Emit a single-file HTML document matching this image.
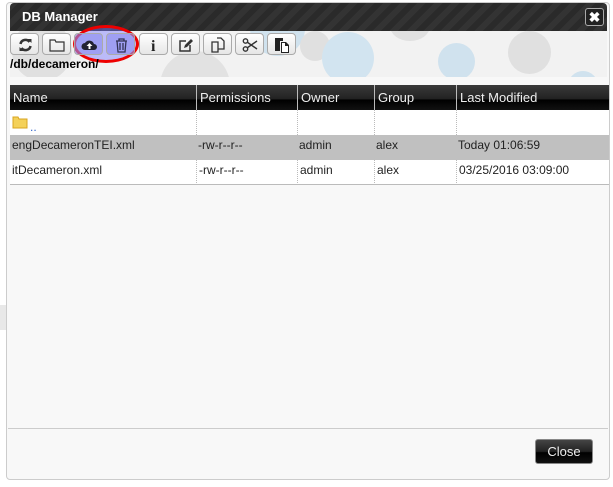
<!DOCTYPE html>
<html><head><style>
*{box-sizing:border-box}
body{margin:0;width:613px;height:487px;background:#fff;font-family:"Liberation Sans",sans-serif;position:relative;overflow:hidden}
.abs{position:absolute}
#dlg{left:6px;top:2px;width:604px;height:478px;background:#f8f8f8;border:1px solid #ccc;border-radius:4px}
#title{left:10px;top:3px;width:597px;height:28px;border-radius:4px 4px 0 0;background:repeating-linear-gradient(135deg,#333 0 6px,#2a2a2a 6px 12px);color:#fff;font-weight:bold;font-size:13px;line-height:28px;padding-left:12px}
#x{left:585px;top:8px;width:19px;height:18px;border:1px solid #aaa;border-radius:3px;background:#222;color:#fff;font-size:14px;font-weight:bold;text-align:center;line-height:16px}
#bub{left:10px;top:31px;width:597px;height:46px;background:#f2f2f2;overflow:hidden}
.c{position:absolute;border-radius:50%}
.btn{position:absolute;top:33px;width:29px;height:22px;border:1px solid #aaa;border-radius:4px;background:linear-gradient(#fff,#e6e6e6)}
.btn svg{position:absolute;left:6px;top:3px}
#path{left:10px;top:57px;font-size:12px;font-weight:bold;color:#000}
#thead{left:10px;top:85px;width:599px;height:25px;background:linear-gradient(#3a3a3a,#222 55%,#000 60%,#111);color:#eee;font-size:13px}
#thead div{position:absolute;top:0;height:25px;line-height:25px;padding-left:3px;border-left:1px solid #bbb}
.row{position:absolute;left:10px;width:599px;height:25px;font-size:12px;color:#222}
.row div{position:absolute;top:0;height:25px;line-height:20px;padding-left:2px;border-left:1px dotted #bbb}
</style></head><body>
<div class="abs" style="left:0;top:305px;width:6px;height:25px;background:#e8e8e8"></div>
<div class="abs" id="dlg"></div>
<div class="abs" id="title">DB Manager</div>
<div class="abs" id="x">✖</div>
<div class="abs" id="bub">
<div class="c" style="left:2px;top:-10px;width:60px;height:60px;background:#e0e0e0"></div>
<div class="c" style="left:150px;top:20px;width:70px;height:70px;background:#e2e2e2"></div>
<div class="c" style="left:240px;top:-30px;width:55px;height:55px;background:#d0e2ee"></div>
<div class="c" style="left:290px;top:0px;width:30px;height:30px;background:#e0e0e0"></div>
<div class="c" style="left:312px;top:1px;width:52px;height:52px;background:#d2e4f0"></div>
<div class="c" style="left:428px;top:12px;width:37px;height:37px;background:#d0e2ee"></div>
<div class="c" style="left:498px;top:0px;width:43px;height:43px;background:#e0e0e0"></div>
<div class="c" style="left:558px;top:40px;width:30px;height:30px;background:#d0e2ee"></div>
<div class="c" style="left:380px;top:-20px;width:40px;height:30px;background:#e0e0e0"></div>
</div>
<div class="abs" style="left:73px;top:25px;width:66px;height:38px;border:3px solid #e00;border-radius:50%;background:rgba(120,120,255,.45)"></div>
<div class="btn" style="left:10px"><svg width="17" height="16" viewBox="0 0 16 16"><path d="M3 7a5 5 0 0 1 9-2M13 9a5 5 0 0 1-9 2" stroke="#333" stroke-width="2.5" fill="none"/><path d="M10 2h4v4zM6 14H2v-4z" fill="#333"/></svg></div>
<div class="btn" style="left:42px"><svg width="17" height="16"><path d="M1 3h5l1 2h8v9H1z" fill="none" stroke="#333" stroke-width="1.2"/></svg></div>
<div class="btn" style="left:74px;background:rgba(140,140,240,.6)"><svg width="17" height="16"><path d="M4 13a3.5 3.5 0 0 1 0-7 5 5 0 0 1 9 1 3 3 0 0 1 0 6z" fill="#223"/><path d="M8.5 6l-3 3h2v3h2V9h2z" fill="#fff"/></svg></div>
<div class="btn" style="left:106px;background:rgba(140,140,240,.6)"><svg width="17" height="16"><path d="M3 4h11M6 4V2h5v2M4 4l1 11h7l1-11M7 6v7M10 6v7" fill="none" stroke="#335" stroke-width="1.3"/></svg></div>
<div class="btn" style="left:139px"><svg width="17" height="16"><text x="5" y="14" font-family="Liberation Serif" font-weight="bold" font-size="16" fill="#222">i</text></svg></div>
<div class="btn" style="left:171px"><svg width="17" height="16"><path d="M12 8v6H2V4h6" fill="none" stroke="#333" stroke-width="1.5"/><path d="M6 11l1-3 6-6 2 2-6 6z" fill="#333"/></svg></div>
<div class="btn" style="left:203px"><svg width="17" height="16"><path d="M2 5h6v10H2zM7 1h4l3 3v8H8" fill="none" stroke="#333" stroke-width="1.3"/></svg></div>
<div class="btn" style="left:235px"><svg width="17" height="16"><circle cx="3.5" cy="4" r="2.2" fill="none" stroke="#333" stroke-width="1.4"/><circle cx="3.5" cy="12" r="2.2" fill="none" stroke="#333" stroke-width="1.4"/><path d="M5 5l10 7M5 11l10-7" stroke="#333" stroke-width="1.4"/></svg></div>
<div class="btn" style="left:267px"><svg width="17" height="16"><path d="M1 1h8v3H6v10H1z" fill="#222"/><path d="M7 5h5l3 3v8H7z" fill="#222"/><path d="M8 6h3v3h3v6H8z" fill="#fff"/></svg></div>
<div class="abs" id="path">/db/decameron/</div>
<div class="abs" id="thead">
<div style="left:0;border:0">Name</div><div style="left:186px">Permissions</div><div style="left:287px">Owner</div><div style="left:364px">Group</div><div style="left:446px">Last Modified</div></div>
<div class="row" style="top:110px;background:#fff"><div style="left:0;border:0"><svg width="16" height="14" style="margin-top:5px"><path d="M1 2h5l1 2h8v9H1z" fill="#f4d15a" stroke="#d9a520"/></svg><span style="color:#36c;position:absolute;left:20px;top:7px">..</span></div><div style="left:186px"></div><div style="left:287px"></div><div style="left:364px"></div><div style="left:446px"></div></div>
<div class="row" style="top:135px;background:#c0c0c0"><div style="left:0;border:0">engDecameronTEI.xml</div><div style="left:186px;border:0">-rw-r--r--</div><div style="left:287px;border:0">admin</div><div style="left:364px;border:0">alex</div><div style="left:446px;border:0">Today 01:06:59</div></div>
<div class="row" style="top:160px;background:#fff;border-bottom:1px solid #bbb"><div style="left:0;border:0">itDecameron.xml</div><div style="left:186px">-rw-r--r--</div><div style="left:287px">admin</div><div style="left:364px">alex</div><div style="left:446px">03/25/2016 03:09:00</div></div>
<div class="abs" style="left:8px;top:428px;width:600px;height:1px;background:#ccc"></div>
<div class="abs" style="left:535px;top:439px;width:58px;height:25px;border:1px solid #888;border-radius:3px;background:linear-gradient(#444,#222 50%,#000 55%,#111);color:#eee;font-size:13px;text-align:center;line-height:23px">Close</div>
</body></html>
